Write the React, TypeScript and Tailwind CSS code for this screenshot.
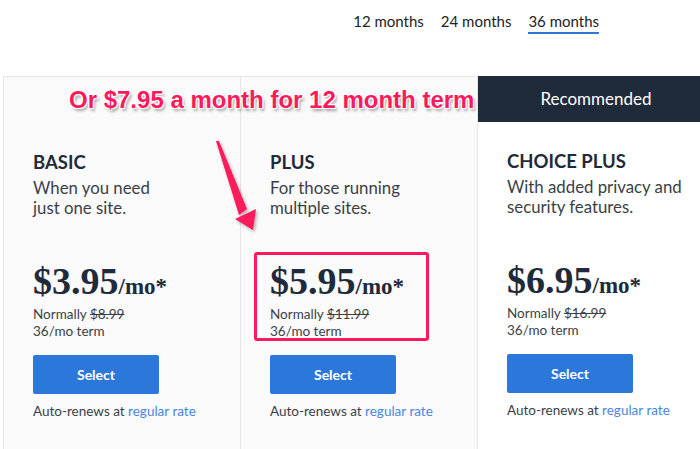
import React from 'react';

type Plan = {
  name: string;
  desc: string[];
  price: string;
  normal: string;
  recommended?: boolean;
};

const plans: Plan[] = [
  { name: 'BASIC', desc: ['When you need', 'just one site.'], price: '$3.95', normal: '$8.99' },
  { name: 'PLUS', desc: ['For those running', 'multiple sites.'], price: '$5.95', normal: '$11.99' },
  {
    name: 'CHOICE PLUS',
    desc: ['With added privacy and', 'security features.'],
    price: '$6.95',
    normal: '$16.99',
    recommended: true,
  },
];

const sans = { fontFamily: 'Lato, "Open Sans", sans-serif' };

const PlanCard = ({ plan, highlight }: { plan: Plan; highlight?: boolean }) => (
  <div
    className={`relative shrink-0 w-[237px] flex flex-col border-t border-l border-[#e6e6e6] ${
      plan.recommended ? 'bg-white' : 'bg-[#fafafa]'
    }`}
  >
    {/* header strip */}
    <div
      className={`h-[46px] flex items-center justify-center text-[17px] ${
        plan.recommended ? 'bg-[#1f2a3a] text-white -mt-px' : ''
      }`}
    >
      {plan.recommended && 'Recommended'}
    </div>

    <div className="pl-[29px] pt-[28px]">
      <h3 className="text-[18.5px] leading-[22px] font-bold text-[#1f2a3a]">{plan.name}</h3>
      <p className="mt-[5px] text-[16.8px] leading-[20px] text-[#3a3f47]">
        {plan.desc[0]}
        <br />
        {plan.desc[1]}
      </p>

      <div
        className="mt-[45px] flex items-baseline text-[#1f2a3a] font-bold"
        style={{ fontFamily: '"Liberation Serif", serif' }}
      >
        <span className="text-[38px] leading-[36px]">{plan.price}</span>
        <span className="text-[23px] leading-none">/mo*</span>
      </div>
      <div className="mt-[7px] text-[13.5px] leading-[17px] text-[#3a3f47]">
        Normally <span className="line-through">{plan.normal}</span>
        <br />
        36/mo term
      </div>

      <button className="mt-[15px] w-[126px] h-[39px] rounded-[2px] bg-[#2c77da] text-white text-[14px] font-bold">
        Select
      </button>
      <p className="mt-[8px] text-[13.5px] leading-[18px] text-[#3a3f47]">
        Auto-renews at <span className="text-[#4a86de]">regular rate</span>
      </p>
    </div>

    {highlight && (
      <div className="absolute left-[13px] top-[175px] w-[175px] h-[89px] border-[3px] border-[#fb1a5c] rounded-[3px]" />
    )}
  </div>
);

export default function App() {
  return (
    <div className="relative w-[700px] h-[449px] overflow-hidden bg-white flex flex-col" style={sans}>
      {/* term tabs */}
      <div className="flex justify-end gap-[17px] pr-[101px] pt-[10px] text-[15px] text-[#222]">
        <span className="h-[24px]">12 months</span>
        <span className="h-[24px]">24 months</span>
        <span className="h-[24px] border-b-[2px] border-[#2c77da]">36 months</span>
      </div>

      {/* cards */}
      <div className="flex flex-1 pl-[3px] mt-[42px]">
        {plans.map((p, i) => (
          <PlanCard key={p.name} plan={p} highlight={i === 1} />
        ))}
      </div>

      {/* annotation overlay */}
      <div
        className="absolute left-[69px] top-[82px] text-[24px] font-bold text-[#fb1a5c] whitespace-nowrap [text-shadow:1px_1px_0_#fff,-1px_-1px_0_#fff,1px_-1px_0_#fff,-1px_1px_0_#fff,2px_3px_3px_rgba(0,0,0,0.35)]"
        style={{ fontFamily: '"Liberation Sans", Arial, sans-serif' }}
      >
        Or $7.95 a month for 12 month term
      </div>

      <svg className="absolute left-0 top-0" width="700" height="449" viewBox="0 0 700 449">
        <defs>
          <filter id="sh" x="-50%" y="-50%" width="200%" height="200%">
            <feDropShadow dx="1.5" dy="2" stdDeviation="1.5" floodColor="#000" floodOpacity="0.3" />
          </filter>
        </defs>
        <g filter="url(#sh)" fill="#fb1a5c">
          <polygon points="216,141 219,141 247,209 239,215" />
          <polygon points="235,219 256,209 253,230" />
        </g>
      </svg>
    </div>
  );
}
